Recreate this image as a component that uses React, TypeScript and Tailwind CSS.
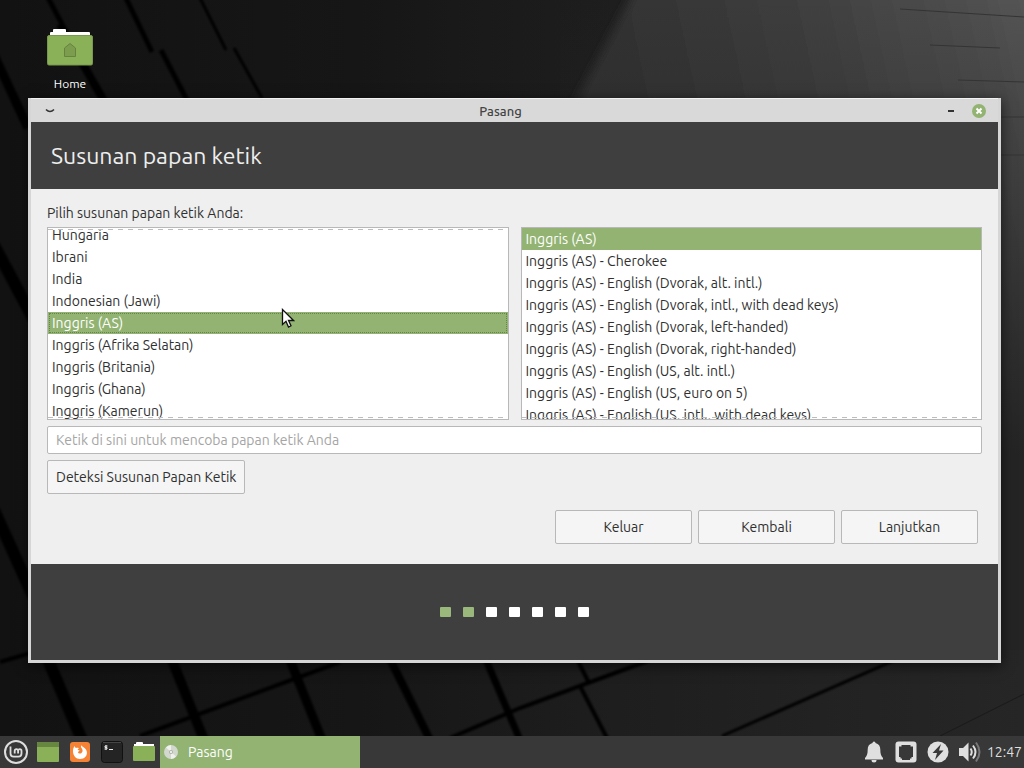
import { useEffect, useRef, useState } from "react";
import clsx from "clsx";

const LAYOUTS = [
  "Hungaria",
  "Ibrani",
  "India",
  "Indonesian (Jawi)",
  "Inggris (AS)",
  "Inggris (Afrika Selatan)",
  "Inggris (Britania)",
  "Inggris (Ghana)",
  "Inggris (Kamerun)",
];

const VARIANTS = [
  "Inggris (AS)",
  "Inggris (AS) - Cherokee",
  "Inggris (AS) - English (Dvorak, alt. intl.)",
  "Inggris (AS) - English (Dvorak, intl., with dead keys)",
  "Inggris (AS) - English (Dvorak, left-handed)",
  "Inggris (AS) - English (Dvorak, right-handed)",
  "Inggris (AS) - English (US, alt. intl.)",
  "Inggris (AS) - English (US, euro on 5)",
  "Inggris (AS) - English (US, intl., with dead keys)",
];

const STEPS = 7;
const CURRENT_STEP = 2;

function Wallpaper() {
  return (
    <svg
      className="absolute inset-0 h-full w-full"
      viewBox="0 0 1024 768"
      preserveAspectRatio="none"
      aria-hidden="true"
    >
      <defs>
        <linearGradient id="base" x1="0" y1="0" x2="1" y2="0">
          <stop offset="0" stopColor="#121212" />
          <stop offset="0.35" stopColor="#161616" />
          <stop offset="0.6" stopColor="#1e1e1e" />
          <stop offset="1" stopColor="#262626" />
        </linearGradient>
        <linearGradient id="slab" x1="560" y1="100" x2="1024" y2="0" gradientUnits="userSpaceOnUse">
          <stop offset="0" stopColor="#2e2e2e" />
          <stop offset="0.5" stopColor="#3d3d3d" />
          <stop offset="1" stopColor="#545454" />
        </linearGradient>
        <linearGradient id="fade" x1="0" y1="0" x2="0" y2="1">
          <stop offset="0" stopColor="#242424" stopOpacity="0" />
          <stop offset="0.7" stopColor="#242424" />
        </linearGradient>
        <filter id="soft">
          <feGaussianBlur stdDeviation="5" />
        </filter>
        <filter id="edge">
          <feGaussianBlur stdDeviation="1" />
        </filter>
      </defs>
      <rect width="1024" height="768" fill="url(#base)" />
      <path d="M645 -30 L555 140 L555 620 L1100 620 L1100 -30 Z" fill="url(#slab)" filter="url(#soft)" />
      <rect x="560" width="464" height="650" fill="url(#fade)" />
      <g fill="none" stroke="#060606" filter="url(#edge)">
        <path d="M60 24 L108 108" strokeWidth="8" />
        <path d="M46 -6 L62 24 M124 -6 L152 52 M161 50 L190 106" strokeWidth="5" />
        <path d="M198 -6 L226 50 M234 48 L262 98" strokeWidth="3" />
        <path d="M-6 55 L28 128" strokeWidth="9" />
        <path d="M-6 245 L34 320 M-6 510 L34 598" strokeWidth="12" />
        <path d="M46 655 L82 740" strokeWidth="12" />
        <path d="M170 655 L204 740" strokeWidth="10" />
        <path d="M288 655 L322 740" strokeWidth="9" />
        <path d="M388 655 L430 740" strokeWidth="8" />
        <path d="M484 655 L520 740" strokeWidth="7" />
        <path d="M575 655 L589 683 M580 686 L608 740" strokeWidth="4" />
        <path d="M0 662 L34 652 M140 736 L340 662 M450 738 L520 708 L650 660" strokeWidth="4" />
        <path d="M722 736 L895 660" strokeWidth="3" />
      </g>
      <g fill="none" stroke="#343434">
        <path d="M900 9 L1024 17" />
        <path d="M930 45 L1000 48" />
        <path d="M958 80 L1024 82" />
        <path d="M1001 117 H1024 M1001 155 H1024" />
        <path d="M940 736 L1024 694" stroke="#1a1a1a" />
      </g>
    </svg>
  );
}

function HomeFolder() {
  return (
    <a href="#home" className="absolute top-7 left-5 flex w-[100px] flex-col items-center gap-2 text-white">
      <svg width="46" height="40" viewBox="0 0 46 40" aria-hidden="true">
        <path d="M3 10V5a1 1 0 0 1 1-1h2V2a1 1 0 0 1 1-1h11a1 1 0 0 1 1 1v2h23a1 1 0 0 1 1 1v5Z" fill="#fff" />
        <rect x="0.5" y="7.5" width="45" height="29.5" rx="1.5" fill="#8bb158" stroke="#78994b" />
        <path d="M17.5 20 23 15.500l5.500 4.500v8.500h-11Z" fill="#7b9d4d" stroke="#65833f" />
      </svg>
      <span className="text-[12px] leading-4">Home</span>
    </a>
  );
}

interface OptionListProps {
  label: string;
  items: string[];
  value: string;
  onChange: (item: string) => void;
  scrollOffset?: number;
  focused?: boolean;
}

function OptionList({ label, items, value, onChange, scrollOffset = 0, focused = false }: OptionListProps) {
  const listRef = useRef<HTMLUListElement>(null);

  useEffect(() => {
    if (listRef.current) listRef.current.scrollTop = scrollOffset;
  }, [scrollOffset]);

  return (
    <div className="relative h-[193px] min-w-0 flex-1 border border-[#b8b8b8] bg-white">
      <ul
        ref={listRef}
        role="listbox"
        aria-label={label}
        tabIndex={0}
        className="h-full overflow-y-auto outline-none [scrollbar-width:none]"
      >
        {items.map((item) => (
          <li
            key={item}
            role="option"
            aria-selected={item === value}
            onClick={() => onChange(item)}
            className={clsx(
              "h-[22px] truncate px-1 leading-[22px]",
              item === value && "bg-[#92b372] text-white",
              item === value && focused && "outline outline-dotted -outline-offset-2 outline-[#65834a]",
            )}
          >
            {item}
          </li>
        ))}
      </ul>
      {/* dashed edges hint that the list scrolls further */}
      {scrollOffset > 0 && <DashedEdge className="top-px" />}
      <DashedEdge className="bottom-px" />
    </div>
  );
}

function DashedEdge({ className }: { className: string }) {
  return (
    <div
      className={clsx(
        "pointer-events-none absolute inset-x-0 h-px bg-[repeating-linear-gradient(90deg,#bdbdbd_0_5px,transparent_5px_10px)]",
        className,
      )}
    />
  );
}

function PushButton({ children, className }: { children: string; className?: string }) {
  return (
    <button
      type="button"
      className={clsx(
        "h-[34px] rounded-[2px] border border-[#b8b8b8] bg-[#f5f5f5] text-center text-[#303030] hover:bg-white",
        className,
      )}
    >
      {children}
    </button>
  );
}

function InstallerWindow() {
  const [layout, setLayout] = useState("Inggris (AS)");
  const [variant, setVariant] = useState("Inggris (AS)");

  return (
    <main className="absolute top-[98px] right-[23px] left-7 flex flex-col border-x-3 border-b-3 border-[#d6d6d6] bg-[#efefef] shadow-[0_3px_12px_rgba(0,0,0,0.6)]">
      <div className="flex h-6 items-center justify-between border-t border-[#f2f2f2] bg-[#d9d9d9] pr-3 pl-3.5 text-[#404040]">
        <button type="button" aria-label="Menu jendela" className="flex w-[30px]">
          <svg width="10" height="6" viewBox="0 0 10 6" aria-hidden="true">
            <path d="M1 1.500q4 4 8 0" fill="none" stroke="#333" strokeWidth="1.600" />
          </svg>
        </button>
        <h1 className="text-[13px] leading-5 font-medium text-[#454545]">Pasang</h1>
        <div className="flex w-[60px] items-center justify-end gap-4">
          <button type="button" aria-label="Kecilkan" className="flex h-4 w-2 items-center">
            <span className="h-0.5 w-1.5 bg-[#333]" />
          </button>
          <button type="button" aria-label="Tutup">
            <svg width="14" height="14" viewBox="0 0 14 14" aria-hidden="true" className="block">
              <circle cx="7" cy="7" r="7" fill="#92b372" />
              <path d="m4.500 4.500 5 5m0-5-5 5" stroke="#fff" strokeWidth="2" />
            </svg>
          </button>
        </div>
      </div>

      <header className="flex h-[67px] items-center bg-[#3f3f3f] px-5">
        <h2 className="text-[23px] leading-8 text-[#eeeeee]">Susunan papan ketik</h2>
      </header>

      <form className="flex flex-col px-4 pt-3.5 pb-5" onSubmit={(e) => e.preventDefault()}>
        <p className="mb-1 leading-5">Pilih susunan papan ketik Anda:</p>
        <div className="flex gap-3">
          <OptionList
            label="Susunan"
            items={LAYOUTS}
            value={layout}
            onChange={setLayout}
            scrollOffset={4}
            focused
          />
          <OptionList label="Varian" items={VARIANTS} value={variant} onChange={setVariant} />
        </div>
        <input
          type="text"
          aria-label="Coba papan ketik"
          placeholder="Ketik di sini untuk mencoba papan ketik Anda"
          className="mt-1.5 h-7 rounded-[2px] border border-[#b8b8b8] bg-white px-2 outline-none placeholder:text-[#a5a5a5]"
        />
        <PushButton className="mt-1.5 self-start px-2">Deteksi Susunan Papan Ketik</PushButton>
        <div className="mt-4 flex justify-end gap-1.5 pr-1">
          <PushButton className="w-[137px]">Keluar</PushButton>
          <PushButton className="w-[137px]">Kembali</PushButton>
          <PushButton className="w-[137px]">Lanjutkan</PushButton>
        </div>
      </form>

      <footer className="flex h-24 items-center justify-center gap-3 bg-[#3f3f3f]">
        {Array.from({ length: STEPS }, (_, i) => (
          <span
            key={i}
            className={clsx("h-2.5 w-[11px] rounded-[1px]", i < CURRENT_STEP ? "bg-[#9ab87c]" : "bg-white")}
          />
        ))}
      </footer>
    </main>
  );
}

function Taskbar() {
  return (
    <nav className="relative flex h-8 shrink-0 items-center bg-[#383838]">
      <button type="button" aria-label="Menu" className="flex w-8 justify-center">
        <svg width="24" height="24" viewBox="0 0 24 24" fill="none" stroke="#dedede" aria-hidden="true">
          <circle cx="12" cy="12" r="11" strokeWidth="2" />
          <path
            d="M6.500 6.500v7a3.200 3.200 0 0 0 3.200 3.200h4.600a3.200 3.200 0 0 0 3.200-3.200v-2.600a1.700 1.700 0 0 0-3.400 0V13.500M14.100 10.900a1.700 1.700 0 0 0-3.400 0V13.500"
            strokeWidth="1.800"
          />
        </svg>
      </button>
      <button type="button" aria-label="Tampilkan desktop" className="flex w-8 justify-center">
        <svg width="22" height="20" viewBox="0 0 22 20" aria-hidden="true">
          <rect width="22" height="20" rx="1" fill="#8bb158" />
          <path d="M1 0h20a1 1 0 0 1 1 1v4H0V1a1 1 0 0 1 1-1Z" fill="#67863f" />
        </svg>
      </button>
      <button type="button" aria-label="Firefox" className="flex w-8 justify-center">
        <svg width="20" height="20" viewBox="0 0 20 20" aria-hidden="true">
          <rect width="20" height="20" rx="3" fill="#f58235" />
          <path
            d="M3 9c0-2 .5-3.500 1.500-5 .3 1 .8 1.500 1.500 2 1-.3 2-.2 3 .2-1 .5-1.300 1-1.200 1.800l1.700.3c-.2 1-1 1.300-1.600 1.700.4 1.700 2.500 2 3.600 1 1.700-1.400 1.300-3.700-.3-5.500-.4-.6-.3-1.600.3-2.300.3 1.200 1.400 1.600 2.400 2.400 1.200.8 2.300 2 2.900 3.900.9 4-2.200 7.500-6.800 7.500C5.800 17 3 13.500 3 9Z"
            fill="#fff"
          />
        </svg>
      </button>
      <button type="button" aria-label="Terminal" className="flex w-8 justify-center">
        <svg width="22" height="22" viewBox="0 0 22 22" fill="none" aria-hidden="true">
          <rect x="0.500" y="0.500" width="21" height="21" rx="3" fill="#242424" stroke="#111" />
          <path d="M2 1.500h18" stroke="#454545" />
          <path d="M6.500 5H4v1.500h2V8H3.500M5 4v5M8 8.500h4" stroke="#e8e8e8" />
        </svg>
      </button>
      <button type="button" aria-label="Berkas" className="flex w-8 justify-center">
        <svg width="22" height="20" viewBox="0 0 22 20" aria-hidden="true">
          <path d="M1 5V2h2V1a1 1 0 0 1 1-1h5a1 1 0 0 1 1 1v1h11v3Z" fill="#fff" />
          <rect y="4" width="22" height="15" rx="1" fill="#8bb158" />
        </svg>
      </button>
      <button
        type="button"
        className="flex w-[200px] items-center gap-2.5 self-stretch bg-[#92b372] px-1 text-left text-white"
      >
        <svg width="14" height="14" viewBox="0 0 14 14" aria-hidden="true">
          <circle cx="7" cy="7" r="7" fill="#d3d8cf" />
          <path d="M7 7 2 2.500A7 7 0 0 1 7 0ZM7 7l5 4.500A7 7 0 0 1 7 14Z" fill="#eff1ed" />
          <circle cx="7" cy="7" r="2" fill="#aab2a4" />
          <circle cx="7" cy="7" r="1" fill="#fff" />
        </svg>
        Pasang
      </button>

      <div className="ml-auto flex items-center gap-2.5 pr-0.5 text-[#dfdfdf]">
        <button type="button" aria-label="Pemberitahuan">
          <svg width="22" height="22" viewBox="0 0 22 22" fill="currentColor" aria-hidden="true">
            <path d="M9.500 2a1.500 1.500 0 0 1 3 0c3.300.8 4.800 3.200 4.800 6.500 0 4.500.9 6.500 2.700 8.500v1.500H2V17c1.800-2 2.700-4 2.700-8.500 0-3.300 1.500-5.700 4.800-6.500Z" />
            <path d="M8.500 19h5a2.500 2.500 0 0 1-5 0Z" />
          </svg>
        </button>
        <button type="button" aria-label="Jaringan">
          <svg width="22" height="22" viewBox="0 0 22 22" aria-hidden="true">
            <rect x="0.500" y="0.500" width="21" height="21" rx="3" fill="currentColor" />
            <path d="M6.500 4h9v1.500H18V16h-1.500v1.500H15V19H7v-1.500H5.500V16H4V5.500h2.500Z" fill="#383838" />
          </svg>
        </button>
        <button type="button" aria-label="Daya">
          <svg width="22" height="22" viewBox="0 0 22 22" aria-hidden="true">
            <circle cx="11" cy="11" r="10.500" fill="currentColor" />
            <path d="M14 3 5.500 12H10l-2 7 8.500-9.500H12Z" fill="#383838" />
          </svg>
        </button>
        <button type="button" aria-label="Suara">
          <svg width="22" height="22" viewBox="0 0 22 22" fill="none" stroke="currentColor" aria-hidden="true">
            <path d="M0 7h4l5.500-5.500v19L4 15H0Z" fill="currentColor" stroke="none" />
            <path d="M11.500 7.500q2.500 3.500 0 7" strokeWidth="2" />
            <path d="M14 4.500q5 6.500 0 13" strokeWidth="2" />
            <path d="M17 1.500q7 9.500 0 19" stroke="#777" strokeWidth="2" />
          </svg>
        </button>
        <time className="-ml-1 leading-5">12:47</time>
      </div>
    </nav>
  );
}

function MouseCursor() {
  return (
    <svg
      className="pointer-events-none absolute top-[308px] left-[281px]"
      width="14"
      height="21"
      viewBox="0 0 14 21"
      aria-hidden="true"
    >
      <path d="M1.500 1.500v15l3.500-3.200 2.500 5.700 2.500-1.200-2.500-5.300h5Z" fill="#fff" stroke="#111" strokeWidth="1.300" />
    </svg>
  );
}

export default function App() {
  return (
    <div className="relative flex min-h-screen flex-col overflow-hidden bg-[#151515] font-['Ubuntu','Noto_Sans',sans-serif] text-[14px] text-[#303030]">
      <Wallpaper />
      <div className="flex-1">
        <HomeFolder />
        <InstallerWindow />
      </div>
      <Taskbar />
      <MouseCursor />
    </div>
  );
}
